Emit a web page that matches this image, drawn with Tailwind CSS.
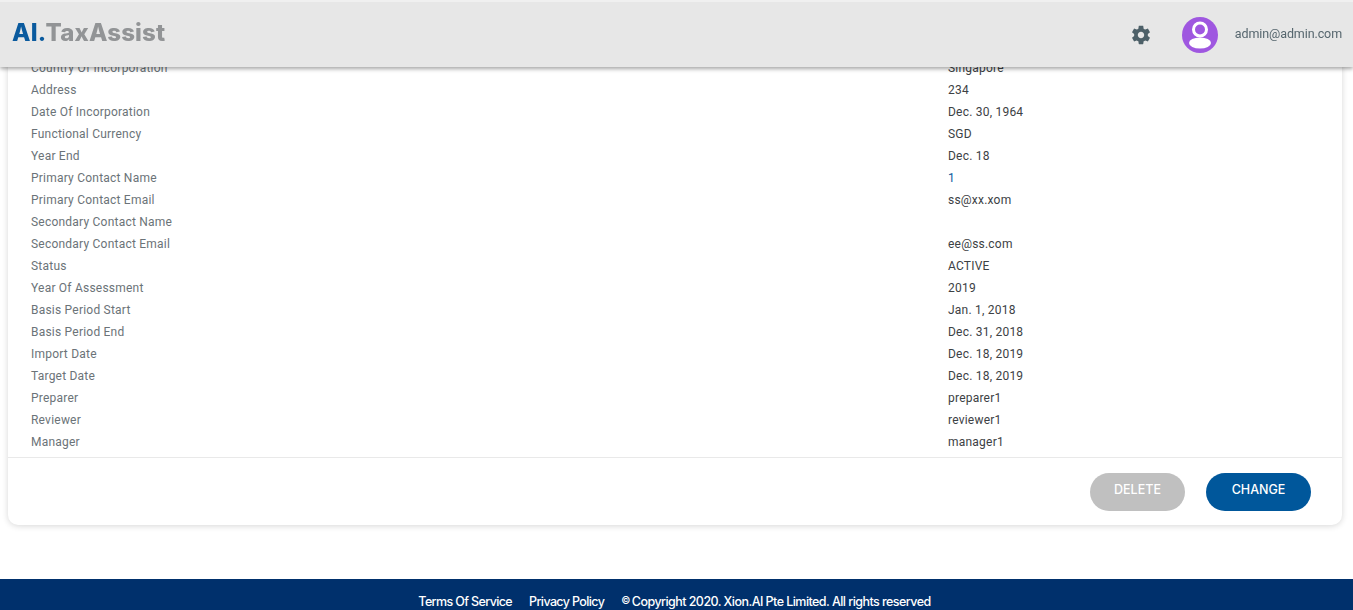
<!DOCTYPE html>
<html lang="en">
<head>
  <meta charset="UTF-8" />
  <title>AI.TaxAssist</title>
  <script src="https://cdn.jsdelivr.net/npm/@tailwindcss/browser@4"></script>
</head>
<body class="bg-white font-['Roboto',sans-serif] h-[610px] overflow-hidden relative">

  <!-- Navbar -->
  <nav class="fixed top-0 left-0 right-0 z-50 h-[67px] border-t-2 border-[#f0f0f0] bg-[#e7e7e7] shadow-[0_2px_4px_rgba(0,0,0,0.35)] flex items-center pl-3 pr-[11px]">
    <div class="text-[24px] font-extrabold leading-none font-['Inter',sans-serif] tracking-[0.18px] -mt-[4px]">
      <span class="text-[#0a5a9e]">AI.</span><span class="text-[#929496]">TaxAssist</span>
    </div>
    <div class="ml-auto flex items-center">
      <svg class="w-[22px] h-[22px] text-[#4d6068]" viewBox="0 0 24 24" fill="currentColor">
        <path d="M19.43 12.98c.04-.32.07-.64.07-.98s-.03-.66-.07-.98l2.11-1.65c.19-.15.24-.42.12-.64l-2-3.46c-.12-.22-.39-.3-.61-.22l-2.49 1c-.52-.4-1.08-.73-1.69-.98l-.38-2.65C14.46 2.18 14.25 2 14 2h-4c-.25 0-.46.18-.49.42l-.38 2.65c-.61.25-1.17.59-1.69.98l-2.49-1c-.23-.09-.49 0-.61.22l-2 3.46c-.13.22-.07.49.12.64l2.11 1.65c-.04.32-.07.65-.07.98s.03.66.07.98l-2.11 1.65c-.19.15-.24.42-.12.64l2 3.46c.12.22.39.3.61.22l2.49-1c.52.4 1.08.73 1.69.98l.38 2.65c.03.24.24.42.49.42h4c.25 0 .46-.18.49-.42l.38-2.65c.61-.25 1.17-.59 1.69-.98l2.49 1c.23.09.49 0 .61-.22l2-3.46c.12-.22.07-.49-.12-.64l-2.11-1.65zM12 15.5c-1.93 0-3.5-1.57-3.5-3.5s1.57-3.5 3.5-3.5 3.5 1.57 3.5 3.5-1.57 3.5-3.5 3.5z"/>
      </svg>
      <svg class="w-[36px] h-[36px] ml-[30px]" viewBox="0 0 36 36">
        <circle cx="18" cy="18" r="18" fill="#9f57e0"/>
        <circle cx="18" cy="12.5" r="6.5" fill="none" stroke="#fff" stroke-width="3"/>
        <ellipse cx="18" cy="26" rx="11" ry="5.5" fill="#fff"/>
      </svg>
      <span class="ml-[17px] text-[12.5px] tracking-[-0.1px] text-[#56666e]">admin@admin.com</span>
    </div>
  </nav>

  <!-- Main Content -->
  <main class="pt-[40px] px-[8px] pr-[11px] h-[579px]">
    <div class="bg-white rounded-[10px] shadow-[0_1px_6px_rgba(0,0,0,0.16)]">
      <div class="pt-[17px] pb-[4px] pl-[23px] text-[12px] leading-[22px] tracking-[0.22px]">
        <div class="flex"><div class="w-[917px] text-[#6b7378]">Country Of Incorporation</div><div class="text-[#3c4144]">Singapore</div></div>
        <div class="flex"><div class="w-[917px] text-[#6b7378]">Address</div><div class="text-[#3c4144]">234</div></div>
        <div class="flex"><div class="w-[917px] text-[#6b7378]">Date Of Incorporation</div><div class="text-[#3c4144]">Dec. 30, 1964</div></div>
        <div class="flex"><div class="w-[917px] text-[#6b7378]">Functional Currency</div><div class="text-[#3c4144]">SGD</div></div>
        <div class="flex"><div class="w-[917px] text-[#6b7378]">Year End</div><div class="text-[#3c4144]">Dec. 18</div></div>
        <div class="flex"><div class="w-[917px] text-[#6b7378]">Primary Contact Name</div><a href="#" class="text-[#0a5a9e]">1</a></div>
        <div class="flex"><div class="w-[917px] text-[#6b7378]">Primary Contact Email</div><div class="text-[#3c4144]">ss@xx.xom</div></div>
        <div class="flex"><div class="w-[917px] text-[#6b7378]">Secondary Contact Name</div><div class="text-[#3c4144]"></div></div>
        <div class="flex"><div class="w-[917px] text-[#6b7378]">Secondary Contact Email</div><div class="text-[#3c4144]">ee@ss.com</div></div>
        <div class="flex"><div class="w-[917px] text-[#6b7378]">Status</div><div class="text-[#3c4144]">ACTIVE</div></div>
        <div class="flex"><div class="w-[917px] text-[#6b7378]">Year Of Assessment</div><div class="text-[#3c4144]">2019</div></div>
        <div class="flex"><div class="w-[917px] text-[#6b7378]">Basis Period Start</div><div class="text-[#3c4144]">Jan. 1, 2018</div></div>
        <div class="flex"><div class="w-[917px] text-[#6b7378]">Basis Period End</div><div class="text-[#3c4144]">Dec. 31, 2018</div></div>
        <div class="flex"><div class="w-[917px] text-[#6b7378]">Import Date</div><div class="text-[#3c4144]">Dec. 18, 2019</div></div>
        <div class="flex"><div class="w-[917px] text-[#6b7378]">Target Date</div><div class="text-[#3c4144]">Dec. 18, 2019</div></div>
        <div class="flex"><div class="w-[917px] text-[#6b7378]">Preparer</div><div class="text-[#3c4144]">preparer1</div></div>
        <div class="flex"><div class="w-[917px] text-[#6b7378]">Reviewer</div><div class="text-[#3c4144]">reviewer1</div></div>
        <div class="flex"><div class="w-[917px] text-[#6b7378]">Manager</div><div class="text-[#3c4144]">manager1</div></div>
      </div>
      <div class="border-t border-[#e9e9e9] h-[68px] flex items-start justify-end gap-[21px] pt-[15px] pr-[31px] font-['Inter',sans-serif] text-[12.5px] font-medium text-white">
        <button class="w-[95px] h-[38px] rounded-full bg-[#c0c0c0] pb-[4px]">DELETE</button>
        <button class="w-[105px] h-[38px] rounded-full bg-[#00579b] pb-[4px]">CHANGE</button>
      </div>
    </div>
  </main>

  <!-- Footer -->
  <footer class="h-[31px] bg-[#00306c] flex justify-center items-start pt-[14px] pr-[4px] text-white text-[12.5px] leading-[17px] font-medium font-['Inter',sans-serif] tracking-[-0.62px] gap-[17px]">
    <a href="#">Terms Of Service</a>
    <a href="#">Privacy Policy</a>
    <span class="tracking-[-0.55px]"><span class="text-[10px] leading-none align-[2px] mr-[2px]">©</span>Copyright 2020. Xion.AI Pte Limited. All rights reserved</span>
  </footer>

</body>
</html>
